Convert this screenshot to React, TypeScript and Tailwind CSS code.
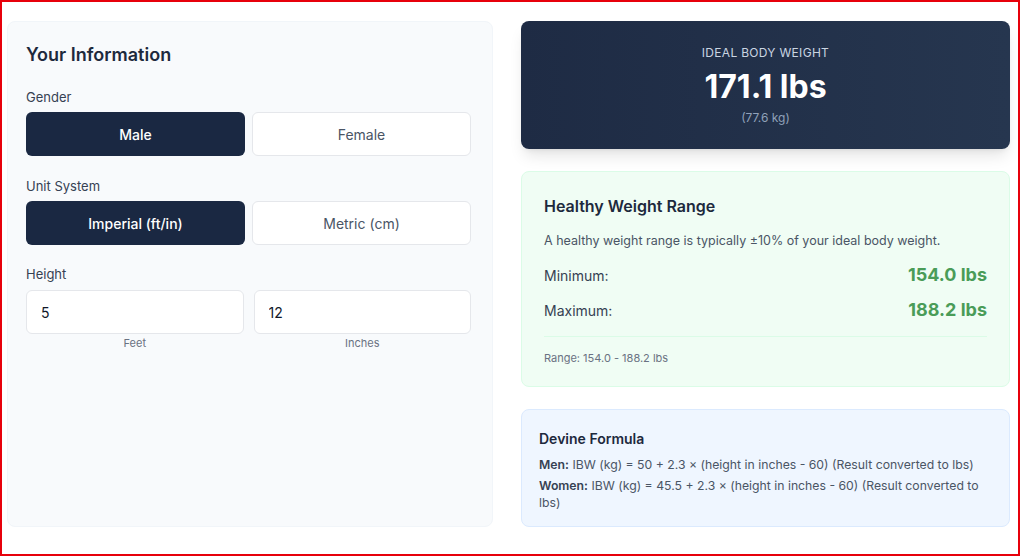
import { useState } from "react";

function Toggle({
  options,
  value,
  onChange,
}: {
  options: string[];
  value: string;
  onChange: (v: string) => void;
}) {
  return (
    <div className="grid grid-cols-2 gap-[7px]">
      {options.map((o) => (
        <button
          key={o}
          type="button"
          onClick={() => onChange(o)}
          className={
            value === o
              ? "h-[44px] rounded-md bg-[#1a2842] text-[14px] font-medium text-white"
              : "h-[44px] rounded-md border border-gray-200 bg-white text-[14px] text-gray-600"
          }
        >
          {o}
        </button>
      ))}
    </div>
  );
}

export default function App() {
  const [gender, setGender] = useState("Male");
  const [unit, setUnit] = useState("Imperial (ft/in)");
  const [feet, setFeet] = useState("5");
  const [inches, setInches] = useState("12");

  return (
    <div className="h-[557px] w-[1024px] bg-white font-['Inter',sans-serif] text-slate-800">
      <div className="flex h-[556px] w-[1020px] gap-[28px] border-2 border-red-600 pb-[27px] pl-[5px] pt-[19px]">
        <section className="flex w-[486px] flex-col rounded-lg border border-slate-100 bg-slate-50 pl-[18px] pr-[21px] pt-[21px]">
          <h2 className="text-[18px] font-semibold leading-6 text-slate-800">Your Information</h2>

          <div className="mt-[20px] text-[13px] leading-5 text-gray-700">Gender</div>
          <div className="mt-[5px]">
            <Toggle options={["Male", "Female"]} value={gender} onChange={setGender} />
          </div>

          <div className="mt-[20px] text-[13px] leading-5 text-gray-700">Unit System</div>
          <div className="mt-[5px]">
            <Toggle
              options={["Imperial (ft/in)", "Metric (cm)"]}
              value={unit}
              onChange={setUnit}
            />
          </div>

          <div className="mt-[19px] text-[13px] leading-5 text-gray-700">Height</div>
          <div className="mt-[6px] grid grid-cols-2 gap-[10px]">
            <div className="flex flex-col items-center">
              <input
                value={feet}
                onChange={(e) => setFeet(e.target.value)}
                className="h-[44px] w-full rounded-md border border-gray-200 bg-white px-[14px] text-[14px] text-gray-900 outline-none"
              />
              <span className="mt-[1px] text-[11px] leading-4 text-gray-500">Feet</span>
            </div>
            <div className="flex flex-col items-center">
              <input
                value={inches}
                onChange={(e) => setInches(e.target.value)}
                className="h-[44px] w-full rounded-md border border-gray-200 bg-white px-[14px] text-[14px] text-gray-900 outline-none"
              />
              <span className="mt-[1px] text-[11px] leading-4 text-gray-500">Inches</span>
            </div>
          </div>
        </section>

        <div className="flex w-[489px] flex-col gap-[22px]">
          <div className="flex h-[128px] flex-col items-center justify-center rounded-lg bg-gradient-to-r from-[#1e2b44] to-[#26364f] shadow-lg">
            <div className="text-[12px] uppercase leading-4 tracking-wide text-slate-300">
              Ideal Body Weight
            </div>
            <div className="mt-[8px] text-[32px] font-bold leading-9 text-white">171.1 lbs</div>
            <div className="mt-[5px] text-[12px] leading-4 text-slate-400">(77.6 kg)</div>
          </div>

          <div className="rounded-lg border border-green-100 bg-[#f0fdf4] px-[22px] pb-[20px] pt-[22px]">
            <h3 className="text-[16px] font-semibold leading-6 text-slate-800">Healthy Weight Range</h3>
            <p className="mt-[13px] text-[12.5px] leading-5 text-gray-600">
              A healthy weight range is typically ±10% of your ideal body weight.
            </p>
            <div className="mt-[12px] flex items-center justify-between">
              <span className="text-[14px] text-gray-700">Minimum:</span>
              <span className="text-[18px] font-bold leading-6 text-[#4a9c58]">154.0 lbs</span>
            </div>
            <div className="mt-[11px] flex items-center justify-between">
              <span className="text-[14px] text-gray-700">Maximum:</span>
              <span className="text-[18px] font-bold leading-6 text-[#4a9c58]">188.2 lbs</span>
            </div>
            <div className="mt-[14px] border-t border-green-100 pt-[13px] text-[11px] leading-4 text-gray-500">
              Range: 154.0 - 188.2 lbs
            </div>
          </div>

          <div className="flex-1 rounded-lg border border-blue-100 bg-[#eff6ff] px-[17px] pt-[19px]">
            <h4 className="text-[14px] font-semibold leading-5 text-slate-800">Devine Formula</h4>
            <p className="mt-[7px] text-[12.25px] leading-[17px] text-gray-600">
              <strong className="font-semibold text-gray-700">Men:</strong> IBW (kg) = 50 + 2.3 × (height in inches - 60) (Result converted to lbs)
            </p>
            <p className="mt-[4px] text-[12.25px] leading-[17px] text-gray-600">
              <strong className="font-semibold text-gray-700">Women:</strong> IBW (kg) = 45.5 + 2.3 × (height in inches - 60) (Result converted to lbs)
            </p>
          </div>
        </div>
      </div>
    </div>
  );
}
